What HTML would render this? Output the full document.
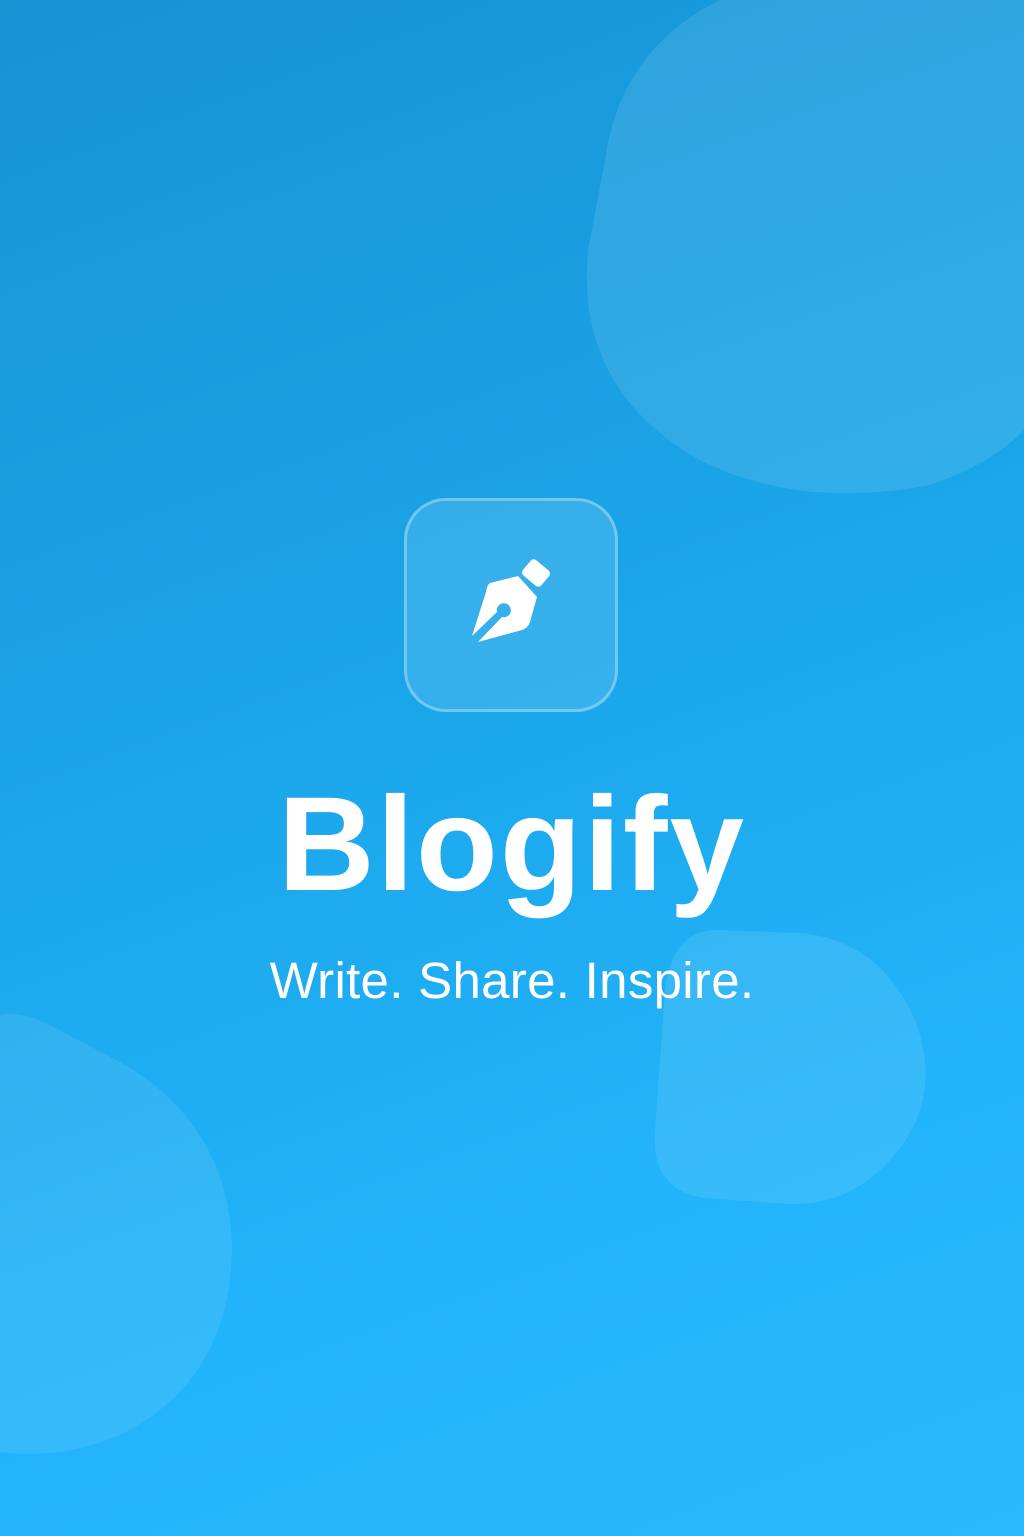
<!DOCTYPE html>
<html><head><meta charset="utf-8"><style>
html,body{margin:0;padding:0}
body{width:1024px;height:1536px;overflow:hidden;position:relative;font-family:"Liberation Sans",sans-serif;
background:linear-gradient(160deg,#1793d4 0%,#1ba6ea 45%,#22b4fb 75%,#2ab9fe 100%);}
.box{position:absolute;left:404px;top:498px;width:208px;height:208px;border-radius:42px;border:3px solid rgba(255,255,255,0.3);background:rgba(255,255,255,0.12)}
h1{position:absolute;left:0;width:1024px;top:770px;margin:0;text-align:center;color:#fff;font-size:134px;font-weight:bold;letter-spacing:2px;line-height:150px}
p{position:absolute;left:0;width:1024px;top:950px;margin:0;text-align:center;color:#fff;font-size:51px;line-height:62px;letter-spacing:0.3px}
</style></head><body>
<svg width="1024" height="1536" style="position:absolute;left:0;top:0">
<path d="M720 0 Q620 50 605 160 L588 250 Q575 390 700 460 Q800 510 930 485 Q990 465 1024 430 L1024 0 Z" fill="rgba(255,255,255,0.1)"/>
<path d="M0 1015 Q20 1010 50 1025 L120 1062 Q230 1125 232 1250 Q230 1380 120 1435 Q60 1460 0 1452 Z" fill="rgba(255,255,255,0.09)"/>
<path d="M720 930 L800 933 Q880 940 915 1020 Q945 1100 890 1160 Q850 1205 790 1204 L705 1198 Q650 1190 655 1130 L665 990 Q672 928 720 930 Z" fill="rgba(255,255,255,0.1)"/>
</svg>
<div class="box"></div>
<svg width="1024" height="1536" style="position:absolute;left:0;top:0">
<path d="M490 583 L518 576 L537 597 L530 622 Q528 628 522 630 L478 642 L502 617 A7 7 0 1 0 497 612 L472 636 L486 592 Q487 585 490 583 Z" fill="#fff"/>
<rect x="524" y="563" width="24" height="20" rx="4" transform="rotate(40 536 573)" fill="#fff"/>
</svg>
<h1>Blogify</h1>
<p>Write. Share. Inspire.</p>
</body></html>
